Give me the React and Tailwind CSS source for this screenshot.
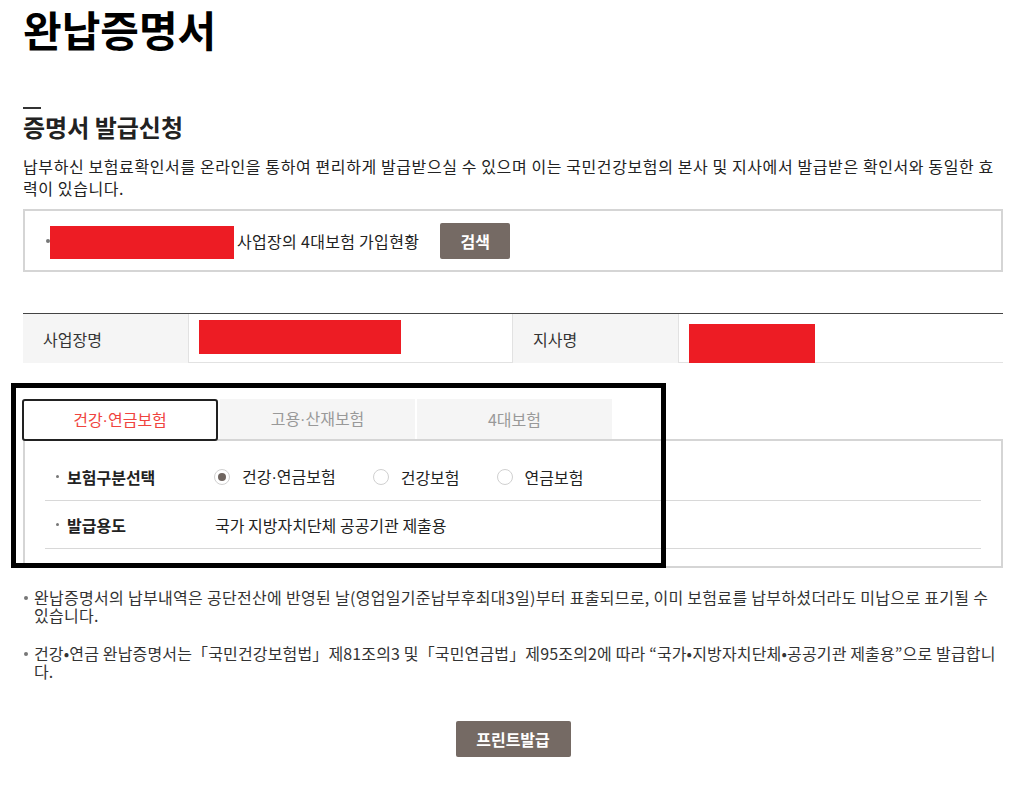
import { useState } from 'react';

const Dot = () => <span className="font-['Liberation_Sans',sans-serif]">·</span>;

const tabs = [
  { key: 'hp', label: <>건강<Dot />연금보험</> },
  { key: 'ei', label: <>고용<Dot />산재보험</> },
  { key: 'all', label: '4대보험' },
];
const kinds = [
  { key: 'hp', label: <>건강<Dot />연금보험</> },
  { key: 'h', label: '건강보험' },
  { key: 'p', label: '연금보험' },
];

const Radio = ({ checked, label, onClick }) => (
  <button type="button" onClick={onClick} className="flex items-center mr-[37px]">
    <span className="w-[16px] h-[16px] rounded-full border border-[#d0d0d0] bg-white flex items-center justify-center">
      {checked && <span className="w-[8px] h-[8px] rounded-full bg-[#6f6560]" />}
    </span>
    <span className="ml-[12px] text-[16px] text-[#222]">{label}</span>
  </button>
);

export default function App() {
  const [activeTab, setActiveTab] = useState(0);
  const [kind, setKind] = useState(0);

  return (
    <div className="min-h-[800px] bg-white text-[#222] font-['Noto_Sans_CJK_KR','Noto_Sans',sans-serif]">
      <div className="ml-[23px] w-[980px] pt-[3px]">
        <h1 className="text-[42px] font-bold leading-[52px] text-black">완납증명서</h1>

        <div className="mt-[52px] h-[2px] w-[18px] bg-[#333]" />
        <h2 className="mt-[5px] text-[24px] font-bold leading-[26px] text-[#222]">증명서 발급신청</h2>
        <p className="mt-[15px] text-[16px] leading-[22px] tracking-[0.6px] text-[#222]">
          납부하신 보험료확인서를 온라인을 통하여 편리하게 발급받으실 수 있으며 이는 국민건강보험의 본사 및 지사에서 발급받은 확인서와 동일한 효<br />력이 있습니다.
        </p>

        {/* search box */}
        <div className="mt-[10px] h-[63px] border-2 border-[#d5d5d5] flex items-center pl-[21px]">
          <span className="w-[4px] h-[4px] rounded-full bg-[#777]" />
          <span className="mt-[4px] w-[184px] h-[33px] bg-[#ed1c24]" />
          <span className="ml-[3px] text-[16px] tracking-[0.3px] text-[#222]">사업장의 4대보험 가입현황</span>
          <button type="button" className="ml-[21px] w-[70px] h-[36px] rounded-[2px] bg-[#756a64] text-white text-[16px] font-bold">
            검색
          </button>
        </div>

        {/* workplace table */}
        <div className="mt-[41px] border-t border-[#444] border-b border-b-[#e2e2e2] grid grid-cols-[166px_324px_166px_324px] h-[50px] text-[16px] text-[#333]">
          <div className="bg-[#f5f5f5] border-r border-[#e2e2e2] flex items-center pl-[20px]">사업장명</div>
          <div className="border-r border-[#e2e2e2] pl-[10px] pt-[6px]">
            <div className="w-[202px] h-[34px] bg-[#ed1c24]" />
          </div>
          <div className="bg-[#f5f5f5] border-r border-[#e2e2e2] flex items-center pl-[20px]">지사명</div>
          <div className="pl-[10px] pt-[10px]">
            <div className="w-[126px] h-[39px] bg-[#ed1c24]" />
          </div>
        </div>

        {/* tabs + form */}
        <div className="relative mt-[36px]">
          <div className="relative z-10 flex gap-[2px] -ml-[1px] h-[42px]">
            {tabs.map((t, i) =>
              i === activeTab ? (
                <button key={t.key} type="button" className="w-[196px] h-[42px] bg-white border-2 border-[#222] rounded-[3px] text-[16px] text-[#f0443e]">
                  {t.label}
                </button>
              ) : (
                <button key={t.key} type="button" onClick={() => setActiveTab(i)} className="w-[195px] h-[40px] bg-[#f5f5f5] text-[16px] text-[#999]">
                  {t.label}
                </button>
              )
            )}
          </div>
          <div className="-mt-[2px] border-2 border-[#d5d5d5] px-[20px] pt-[12px] pb-[17px]">
            <div className="h-[48px] border-b border-[#d8d8d8] flex items-center">
              <div className="w-[170px] flex items-center pl-[11px]">
                <span className="w-[3px] h-[3px] rounded-full bg-[#777]" />
                <span className="ml-[8px] text-[16px] font-bold text-[#222]">보험구분선택</span>
              </div>
              <div className="flex items-center -ml-[1px]">
                {kinds.map((k, i) => (
                  <Radio key={k.key} label={k.label} checked={kind === i} onClick={() => setKind(i)} />
                ))}
              </div>
            </div>
            <div className="h-[48px] border-b border-[#d8d8d8] flex items-center">
              <div className="w-[170px] flex items-center pl-[11px]">
                <span className="w-[3px] h-[3px] rounded-full bg-[#777]" />
                <span className="ml-[8px] text-[16px] font-bold text-[#222]">발급용도</span>
              </div>
              <span className="text-[16px] text-[#222]">국가 지방자치단체 공공기관 제출용</span>
            </div>
          </div>
          <div className="absolute left-[-12px] top-[-16px] w-[655px] h-[185px] border-[5px] border-black pointer-events-none" />
        </div>

        {/* notes */}
        <ul className="mt-[20px] text-[16px] leading-[18px] text-[#333]">
          <li className="flex items-start tracking-[0.3px]">
            <span className="mt-[8px] ml-[1px] w-[4px] h-[4px] rounded-full bg-[#777] shrink-0" />
            <span className="ml-[6px]">
              완납증명서의 납부내역은 공단전산에 반영된 날(영업일기준납부후최대3일)부터 표출되므로, 이미 보험료를 납부하셨더라도 미납으로 표기될 수<br />있습니다.
            </span>
          </li>
          <li className="flex items-start mt-[20px] tracking-[0.15px]">
            <span className="mt-[8px] ml-[1px] w-[4px] h-[4px] rounded-full bg-[#777] shrink-0" />
            <span className="ml-[6px]">
              건강•연금 완납증명서는「국민건강보험법」제81조의3 및「국민연금법」제95조의2에 따라 “국가•지방자치단체•공공기관 제출용”으로 발급합니<br />다.
            </span>
          </li>
        </ul>

        <div className="mt-[41px] flex justify-center">
          <button type="button" className="w-[115px] h-[36px] rounded-[2px] bg-[#756a64] text-white text-[16px] font-bold">
            프린트발급
          </button>
        </div>
      </div>
    </div>
  );
}
